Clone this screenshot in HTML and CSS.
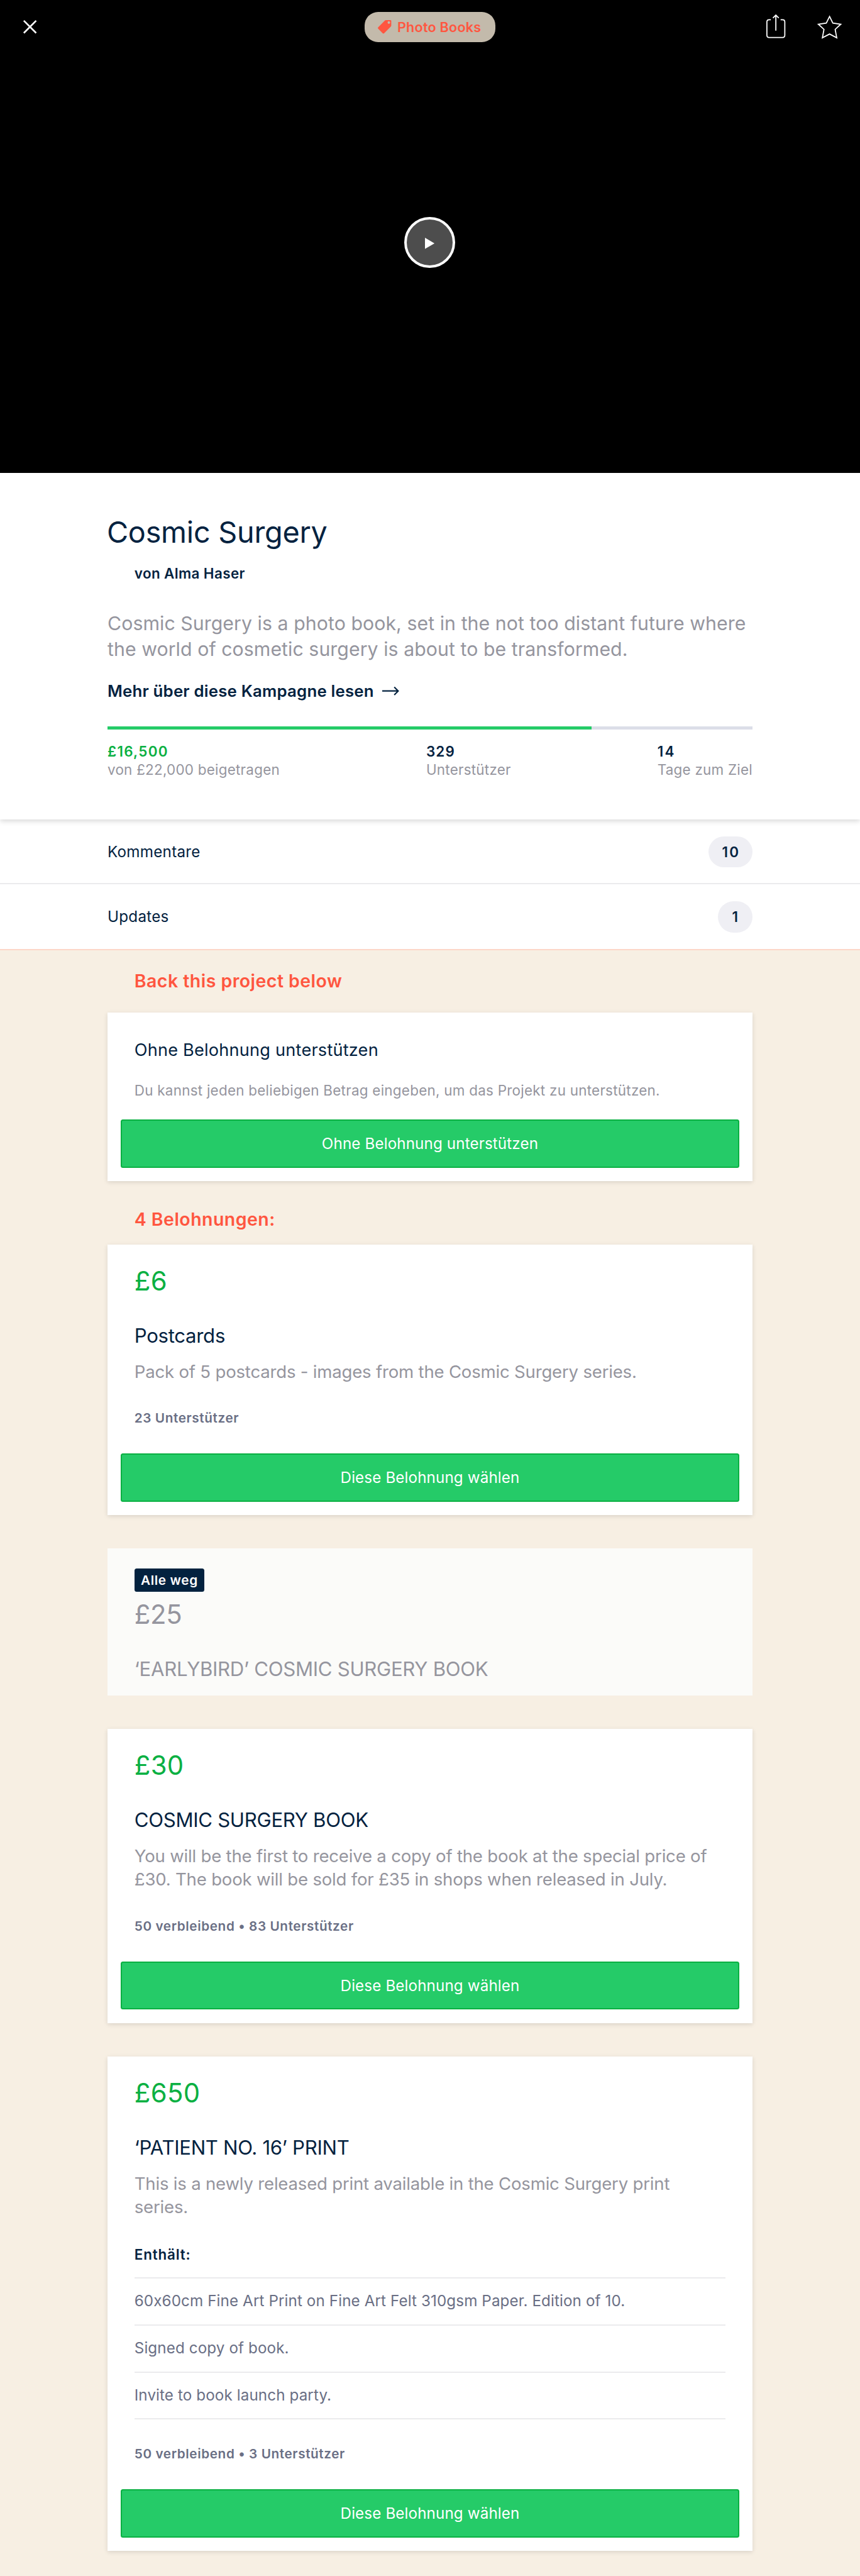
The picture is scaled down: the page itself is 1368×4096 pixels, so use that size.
FILE: index.html
```html
<!DOCTYPE html>
<html lang="de">
<head>
<meta charset="utf-8">
<title>Cosmic Surgery</title>
<link rel="stylesheet" href="styles.css">
</head>
<body>
<header class="video">
  <nav class="toolbar">
    <svg class="icon-close" viewBox="0 0 24 24"><path d="M1 1 23 23M23 1 1 23"/></svg>
    <a class="category">
      <svg class="icon-tag" viewBox="0 0 24 24"><path fill-rule="evenodd" d="M14.2 0H22.5Q24 0 24 1.5V9.8Q24 10.8 23.2 11.6L11.2 23.5Q10 24.5 8.8 23.5L.5 15.2Q-.5 14 .5 12.800L12.500.8Q13.200 0 14.200 0ZM19.700 2A2.300 2.300 0 1 0 19.700 6.600A2.300 2.300 0 1 0 19.700 2Z"/></svg>
      <span>Photo Books</span>
    </a>
    <div class="actions">
      <svg class="icon-share" viewBox="0 0 34 42"><path d="M8 9.500H5Q1 9.500 1 13.500V37Q1 41 5 41H29Q33 41 33 37V13.500Q33 9.500 29 9.500H25.500M17 29V1.500M11.800 6.300 17 1.200 22.200 6.300"/></svg>
      <svg class="icon-star" viewBox="0 0 44 43"><path d="M22 2.500 27.800 14.300 42 16.300 32 25.500 34.800 40.500 22 33.800 9.200 40.500 12 25.500 2 16.300 16.200 14.300Z"/></svg>
    </div>
  </nav>
  <button class="play" aria-label="Play"><svg viewBox="0 0 17 20"><path d="M0 0 17 10 0 20Z"/></svg></button>
</header>

<section class="summary">
  <h1>Cosmic Surgery</h1>
  <p class="author">von Alma Haser</p>
  <p class="blurb">Cosmic Surgery is a photo book, set in the not too distant future where the world of cosmetic surgery is about to be transformed.</p>
  <a class="more">Mehr über diese Kampagne lesen
    <svg viewBox="0 0 30 24"><path d="M0 12H28M21.500 5 28.500 12 21.500 19"/></svg>
  </a>
  <div class="progress"><div class="progress-fill" style="width:75%"></div></div>
  <div class="stats">
    <div class="raised"><strong>£16,500</strong><span>von £22,000 beigetragen</span></div>
    <div class="backers"><strong>329</strong><span>Unterstützer</span></div>
    <div class="days"><strong>14</strong><span>Tage zum Ziel</span></div>
  </div>
</section>

<section class="links">
  <a class="row"><span>Kommentare</span><b class="count two">10</b></a>
  <a class="row last"><span>Updates</span><b class="count">1</b></a>
</section>

<main class="rewards">
  <h2>Back this project below</h2>
  <article class="card plain">
    <h4>Ohne Belohnung unterstützen</h4>
    <p class="note">Du kannst jeden beliebigen Betrag eingeben, um das Projekt zu unterstützen.</p>
    <button class="pledge">Ohne Belohnung unterstützen</button>
  </article>

  <h2 class="second">4 Belohnungen:</h2>
  <article class="card">
    <div class="price">£6</div>
    <h3>Postcards</h3>
    <p class="desc">Pack of 5 postcards - images from the Cosmic Surgery series.</p>
    <p class="meta">23 Unterstützer</p>
    <button class="pledge">Diese Belohnung wählen</button>
  </article>

  <article class="card gone">
    <span class="tag">Alle weg</span>
    <div class="price">£25</div>
    <h3>‘EARLYBIRD’ COSMIC SURGERY BOOK</h3>
  </article>

  <article class="card">
    <div class="price">£30</div>
    <h3>COSMIC SURGERY BOOK</h3>
    <p class="desc">You will be the first to receive a copy of the book at the special price of £30. The book will be sold for £35 in shops when released in July.</p>
    <p class="meta">50 verbleibend • 83 Unterstützer</p>
    <button class="pledge">Diese Belohnung wählen</button>
  </article>

  <article class="card">
    <div class="price">£650</div>
    <h3>‘PATIENT NO. 16’ PRINT</h3>
    <p class="desc">This is a newly released print available in the Cosmic Surgery print series.</p>
    <h5>Enthält:</h5>
    <ul class="items">
      <li>60x60cm Fine Art Print on Fine Art Felt 310gsm Paper. Edition of 10.</li>
      <li>Signed copy of book.</li>
      <li>Invite to book launch party.</li>
    </ul>
    <p class="meta">50 verbleibend • 3 Unterstützer</p>
    <button class="pledge">Diese Belohnung wählen</button>
  </article>
</main>
</body>
</html>
```
FILE: styles.css
```css
html { font-size: 8.90625px; }
* { box-sizing: border-box; margin: 0; padding: 0; }
body { font-family: Inter, "Noto Sans", sans-serif; font-size: 2.72rem; color: #03223f; background: #f7efe3; }
button { font-family: inherit; }
svg { display: block; overflow: visible; }

.video { height: 84.4rem; background: #000; display: flex; flex-direction: column; align-items: center; }
.toolbar { width: 100%; height: 9.6rem; padding: 0 3.2rem 0 4.2rem; display: grid; grid-template-columns: 1fr 23.4rem 1fr; align-items: center; }
.icon-close, .icon-share, .icon-star { fill: none; stroke: #fff; stroke-width: 2; }
.icon-close { width: 2.4rem; height: 2.4rem; stroke-width: 3; }
.category { height: 5.4rem; border-radius: 2.4rem; background: #c3baab; color: #ff5640; display: flex; align-items: center; padding-left: 2.4rem; margin-left: -.5rem; margin-right: .5rem; font-weight: 600; font-size: 2.42rem; letter-spacing: .012em; gap: 1.05rem; white-space: nowrap; }
.icon-tag { width: 2.4rem; height: 2.4rem; fill: #ff5640; }
.actions { display: flex; justify-content: flex-end; gap: 5.7rem; align-items: flex-start; height: 4.4rem; }
.icon-share { width: 3.4rem; height: 4.2rem; }
.icon-star { width: 4.4rem; height: 4.3rem; margin-top: .1rem; }
.play { width: 9.1rem; height: 9.1rem; margin-top: 29.1rem; margin-right: .2rem; border-radius: 50%; border: .45rem solid #fff; background: #4d4d4d; display: flex; align-items: center; justify-content: center; padding: .4rem 0 0 .2rem; }
.play svg { width: 1.7rem; height: 2rem; fill: #fff; }

.summary { position: relative; height: 61.9rem; padding: 7.39rem 19.2rem 0; background: #fff; box-shadow: 0 .4rem .9rem rgba(0,0,0,.15); clip-path: inset(0 0 -2rem); z-index: 1; }
h1 { font-weight: 400; font-size: 5.25rem; line-height: 6.4rem; letter-spacing: -.005em; margin-left: -.12rem; }
.author { font-weight: 600; font-size: 2.52rem; line-height: 3.2rem; letter-spacing: .0166em; margin: 2.69rem 0 0 4.8rem; }
.blurb { font-size: 3.4rem; line-height: 4.58rem; letter-spacing: .002em; color: #95959e; margin: 4.99rem -1rem 0 0; }
.more { display: flex; align-items: center; font-weight: 600; font-size: 2.9rem; line-height: 4rem; letter-spacing: .0075em; margin-top: 3.09rem; gap: 1.5rem; }
.more svg { width: 3rem; height: 2.4rem; fill: none; stroke: #03223f; stroke-width: 2.400; }
.progress { height: .6rem; margin-top: 4.38rem; background: #dcdee8; }
.progress-fill { height: 100%; background: #25cb68; }
.stats { display: flex; justify-content: space-between; margin-top: 2.32rem; font-size: 2.52rem; line-height: 3.24rem; }
.stats strong, .stats span { display: block; }
.stats strong { font-weight: 600; letter-spacing: .053em; }
.stats span { color: #95959e; letter-spacing: .0105em; }
.raised strong { color: #0ab042; letter-spacing: .057em; }
.days strong { letter-spacing: .1em; }

.links { background: #fff; }
.row { display: flex; justify-content: space-between; align-items: center; height: 11.6rem; padding: .2rem 19.2rem 0; border-bottom: 2px solid #ebebed; letter-spacing: .01em; }
.row.last { height: 11.8rem; padding-top: 0; border-color: #fdd6c8; }
.count { width: 6.2rem; height: 5.6rem; border-radius: 2.8rem; background: #efeff4; display: flex; align-items: center; justify-content: center; font-weight: 600; font-size: 2.52rem; }
.count.two { width: 7.9rem; letter-spacing: .1em; padding-left: .1em; }

.rewards { padding: 3.44rem 19.2rem 4.3rem; }
h2 { font-weight: 600; font-size: 3.2rem; line-height: 4rem; letter-spacing: .0162em; color: #ff5640; margin: 0 0 3.66rem 4.8rem; }
h2.second { margin: 4.84rem 0 2.46rem 4.8rem; }
.card { background: #fff; padding: 3.69rem 2.4rem 2.4rem; box-shadow: 0 .2rem .8rem rgba(0,0,0,.12); }
.card + .card { margin-top: 6rem; }
.card > * { margin-left: 2.4rem; margin-right: 2.4rem; }
.card.plain { padding-top: 4.69rem; }
h4 { font-weight: 400; font-size: 3.05rem; line-height: 4rem; letter-spacing: .0074em; }
.note { font-size: 2.52rem; line-height: 3.2rem; letter-spacing: .011em; color: #95959e; margin-top: 3.59rem; white-space: nowrap; }
.card > .pledge { display: flex; align-items: center; justify-content: center; width: 100%; height: 8.6rem; margin: 4.66rem 0 0; border: 2px solid #0ab042; border-radius: .4rem; background: #25cb68; color: #fff; font-size: 2.72rem; letter-spacing: .0045em; }
.card.plain > .pledge { margin-top: 3.62rem; }
.price { font-size: 4.7rem; line-height: 5.6rem; letter-spacing: .008em; color: #0ab042; }
h3 { font-weight: 400; font-size: 3.5rem; line-height: 4.4rem; letter-spacing: -.01em; margin-top: 4.84rem; }
.desc { font-size: 3.1rem; line-height: 4.23rem; letter-spacing: -.0077em; color: #95959e; margin-top: 2.09rem; }
.meta { font-weight: 600; font-size: 2.33rem; line-height: 3.2rem; letter-spacing: .028em; color: #6a6f85; margin-top: 4.57rem; }
.card.gone { background: #fbfbf9; box-shadow: none; padding: 3.6rem 2.4rem 2.37rem; }
.gone .price, .gone h3 { color: #95959e; }
.gone .price { margin-top: 1.29rem; letter-spacing: -.0065em; }
.tag { display: flex; align-items: center; justify-content: center; width: 12.5rem; height: 4.1rem; border-radius: .4rem; background: #03223f; color: #fff; font-weight: 600; font-size: 2.33rem; letter-spacing: .031em; white-space: nowrap; }
h5 { font-weight: 600; font-size: 2.52rem; line-height: 3.2rem; letter-spacing: .036em; margin-top: 4.7rem; }
.items { list-style: none; margin-top: 2.42rem; border-top: 2px solid #ebebed; color: #6a6f85; }
.items li { height: 8.4rem; padding-top: 2.3rem; line-height: 3.6rem; letter-spacing: .004em; border-bottom: 2px solid #ebebed; }
```
